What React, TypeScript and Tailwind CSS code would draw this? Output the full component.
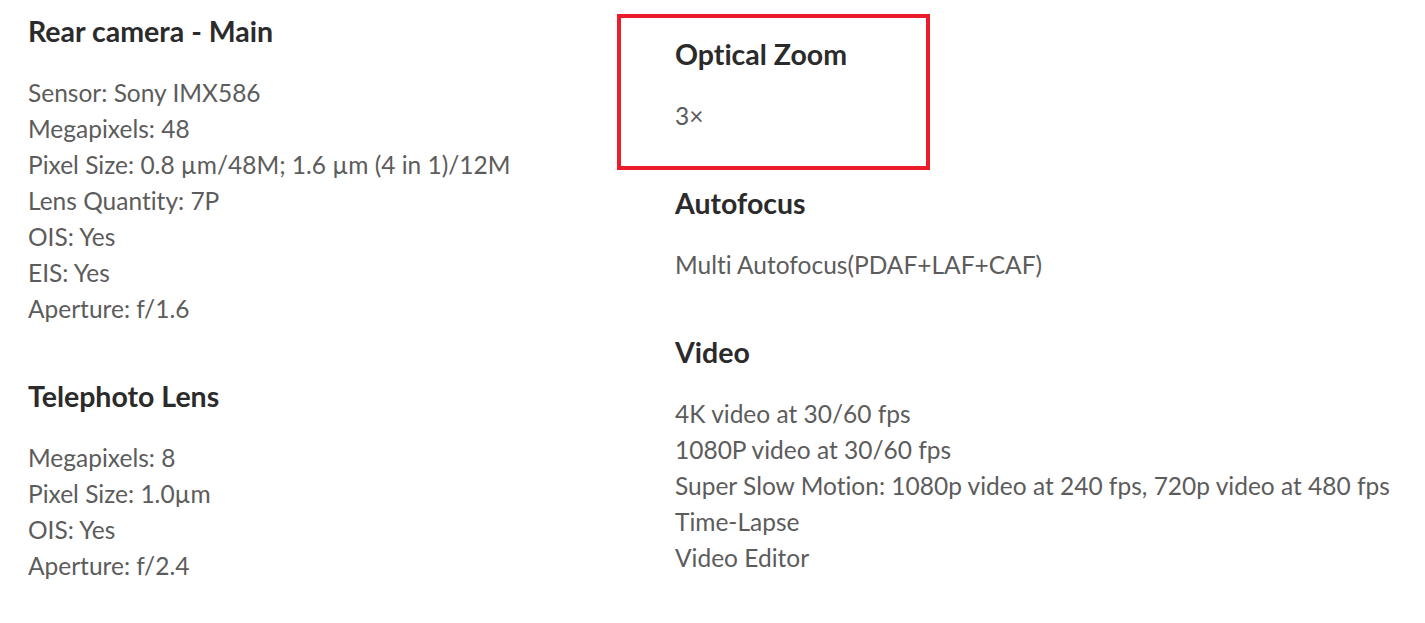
import React from "react";

interface Spec {
  title: string;
  lines: string[];
}

const leftSpecs: Spec[] = [
  {
    title: "Rear camera - Main",
    lines: [
      "Sensor: Sony IMX586",
      "Megapixels: 48",
      "Pixel Size: 0.8 µm/48M; 1.6 µm (4 in 1)/12M",
      "Lens Quantity: 7P",
      "OIS: Yes",
      "EIS: Yes",
      "Aperture: f/1.6",
    ],
  },
  {
    title: "Telephoto Lens",
    lines: ["Megapixels: 8", "Pixel Size: 1.0µm", "OIS: Yes", "Aperture: f/2.4"],
  },
];

function SpecBlock({ spec }: { spec: Spec }) {
  return (
    <div>
      <h3 className="text-[28.5px] leading-[36px] font-bold text-[#2b2b2b] mb-[26px]">
        {spec.title}
      </h3>
      <ul>
        {spec.lines.map((line) => (
          <li key={line} className="text-[24.5px] leading-[36px] text-[#5c5c5c]">
            {line}
          </li>
        ))}
      </ul>
    </div>
  );
}

export default function App() {
  return (
    <div
      className="w-[1425px] h-[623px] bg-white flex overflow-hidden [font-variant-ligatures:none]"
      style={{ fontFamily: "Lato, 'Open Sans', sans-serif" }}
    >
      <div className="w-[617px] pl-[28px] pt-[13px] flex flex-col gap-[51px]">
        {leftSpecs.map((s) => (
          <SpecBlock key={s.title} spec={s} />
        ))}
      </div>
      <div className="flex-1 pt-[14px] flex flex-col">
        <div className="w-[313px] border-4 border-[#ec1c2c] pl-[54px] pt-[18px] pb-[32px]">
          <SpecBlock spec={{ title: "Optical Zoom", lines: ["3×"] }} />
        </div>
        <div className="pl-[58px] pt-[15px] flex flex-col gap-[51px]">
          <SpecBlock
            spec={{ title: "Autofocus", lines: ["Multi Autofocus(PDAF+LAF+CAF)"] }}
          />
          <SpecBlock
            spec={{
              title: "Video",
              lines: [
                "4K video at 30/60 fps",
                "1080P video at 30/60 fps",
                "Super Slow Motion: 1080p video at 240 fps, 720p video at 480 fps",
                "Time-Lapse",
                "Video Editor",
              ],
            }}
          />
        </div>
      </div>
    </div>
  );
}
